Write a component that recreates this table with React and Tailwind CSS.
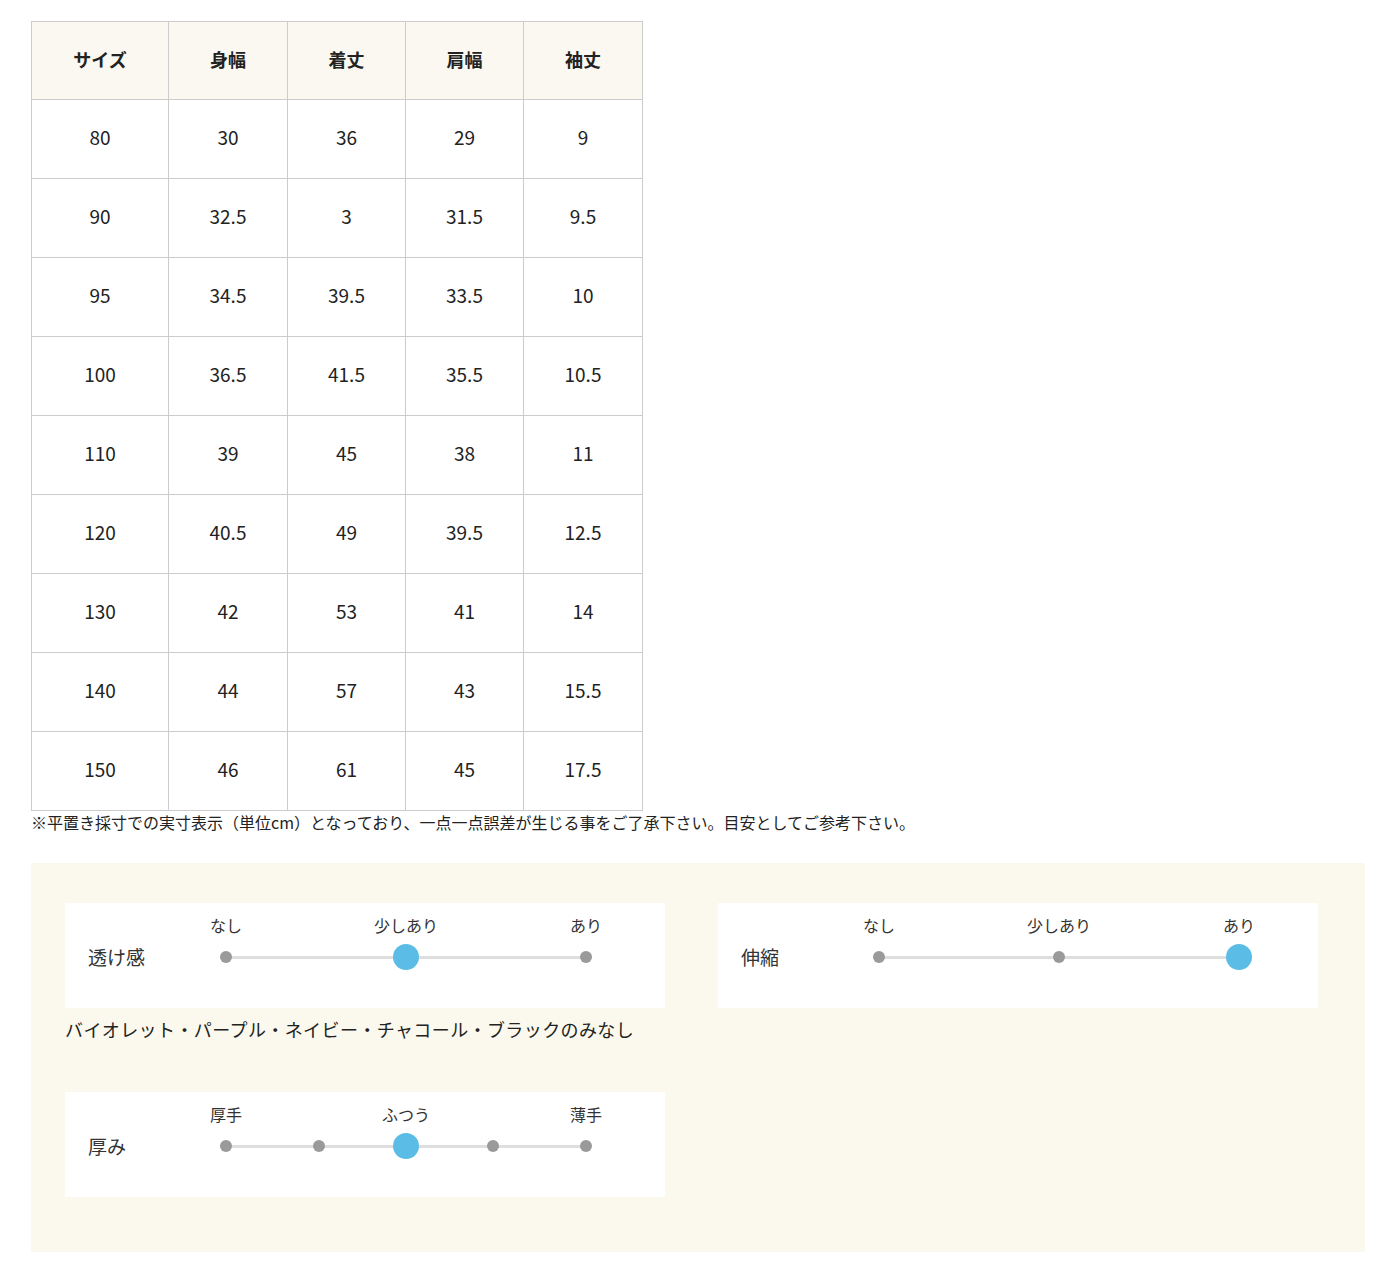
import React from 'react'

const headers = ['サイズ', '身幅', '着丈', '肩幅', '袖丈'];
const rows = [
    ['80', '30', '36', '29', '9'],
    ['90', '32.5', '3', '31.5', '9.5'],
    ['95', '34.5', '39.5', '33.5', '10'],
    ['100', '36.5', '41.5', '35.5', '10.5'],
    ['110', '39', '45', '38', '11'],
    ['120', '40.5', '49', '39.5', '12.5'],
    ['130', '42', '53', '41', '14'],
    ['140', '44', '57', '43', '15.5'],
    ['150', '46', '61', '45', '17.5'],
];
const colWidths = ['w-[137px]', 'w-[119px]', 'w-[118px]', 'w-[118px]', 'w-[119px]'];

const Slider = ({ title, labels, stops, active }) => {
    return (
        <div className="bg-white w-[600px] h-[105px] pt-[12px] pl-[23px] grid grid-cols-[132px_372px] grid-rows-[20px_26px] gap-y-[9px]">
            <div></div>
            <div className="relative">
                {labels.map((l) => (
                    <span
                        key={l.text}
                        className="absolute top-0 -translate-x-1/2 text-[16px] leading-[20px] text-[#333] whitespace-nowrap"
                        style={{ left: 6 + l.at * 360 }}
                    >
                        {l.text}
                    </span>
                ))}
            </div>
            <div className="flex items-center text-[19px] text-[#333]">{title}</div>
            <div className="relative">
                <div className="absolute left-[6px] top-[12px] w-[360px] h-[3px] bg-[#dedede]"></div>
                {stops.map((s, i) =>
                    i === active ? (
                        <span
                            key={i}
                            className="absolute top-0 -translate-x-1/2 w-[26px] h-[26px] rounded-full bg-[#5bbde6]"
                            style={{ left: 6 + s * 360 }}
                        ></span>
                    ) : (
                        <span
                            key={i}
                            className="absolute top-[7px] -translate-x-1/2 w-[12px] h-[12px] rounded-full bg-[#9a9a9a]"
                            style={{ left: 6 + s * 360 }}
                        ></span>
                    )
                )}
            </div>
        </div>
    )
}

export default function App() {
    return (
        <div className="bg-white min-h-[1266px] pl-[31px] pt-[21px] font-['Noto_Sans_CJK_JP','Noto_Sans',sans-serif] text-[#222]">
            <table className="border-collapse table-fixed w-[611px]">
                <thead>
                    <tr className="bg-[#faf8f0]">
                        {headers.map((h, i) => (
                            <th key={h} className={`${colWidths[i]} h-[78px] pb-[2px] border border-[#cccccc] text-[18px] font-bold text-center`}>
                                {h}
                            </th>
                        ))}
                    </tr>
                </thead>
                <tbody>
                    {rows.map((r) => (
                        <tr key={r[0]}>
                            {r.map((c, i) => (
                                <td key={i} className="h-[79px] pb-[3px] border border-[#cccccc] text-[19px] text-center">
                                    {c}
                                </td>
                            ))}
                        </tr>
                    ))}
                </tbody>
            </table>
            <p className="text-[16px] leading-[20px] mt-[1px] text-[#222] whitespace-nowrap">
                ※平置き採寸での実寸表示（単位cm）となっており、一点一点誤差が生じる事をご了承下さい。目安としてご参考下さい。
            </p>

            <div className="mt-[31px] w-[1334px] h-[389px] bg-[#fbf9ee] pt-[40px] pl-[34px]">
                <div className="flex gap-[53px]">
                    <div>
                        <Slider
                            title="透け感"
                            labels={[{ text: 'なし', at: 0 }, { text: '少しあり', at: 0.5 }, { text: 'あり', at: 1 }]}
                            stops={[0, 0.5, 1]}
                            active={1}
                        />
                        <p className="mt-[9px] text-[18px] leading-[24px] tracking-[0.4px] text-[#222]">
                            バイオレット・パープル・ネイビー・チャコール・ブラックのみなし
                        </p>
                    </div>
                    <Slider
                        title="伸縮"
                        labels={[{ text: 'なし', at: 0 }, { text: '少しあり', at: 0.5 }, { text: 'あり', at: 1 }]}
                        stops={[0, 0.5, 1]}
                        active={2}
                    />
                </div>
                <div className="mt-[51px]">
                    <Slider
                        title="厚み"
                        labels={[{ text: '厚手', at: 0 }, { text: 'ふつう', at: 0.5 }, { text: '薄手', at: 1 }]}
                        stops={[0, 0.258, 0.5, 0.742, 1]}
                        active={2}
                    />
                </div>
            </div>
        </div>
    )
}
